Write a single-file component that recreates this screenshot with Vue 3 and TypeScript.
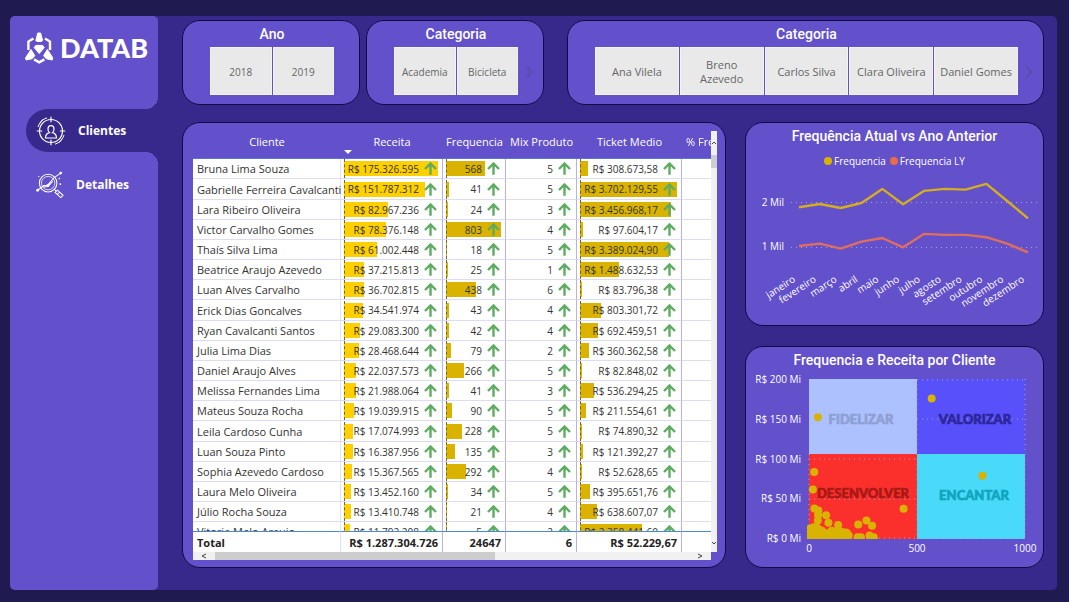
<script setup lang="ts">
interface Row {
  name: string
  revenue: number
  frequency: number
  mix: number
  ticket: number
}

const rows: Row[] = [
  { name: 'Bruna Lima Souza', revenue: 175326595, frequency: 568, mix: 5, ticket: 308673.58 },
  { name: 'Gabrielle Ferreira Cavalcanti', revenue: 151787312, frequency: 41, mix: 5, ticket: 3702129.55 },
  { name: 'Lara Ribeiro Oliveira', revenue: 82967236, frequency: 24, mix: 3, ticket: 3456968.17 },
  { name: 'Victor Carvalho Gomes', revenue: 78376148, frequency: 803, mix: 4, ticket: 97604.17 },
  { name: 'Thaís Silva Lima', revenue: 61002448, frequency: 18, mix: 5, ticket: 3389024.9 },
  { name: 'Beatrice Araujo Azevedo', revenue: 37215813, frequency: 25, mix: 1, ticket: 1488632.53 },
  { name: 'Luan Alves Carvalho', revenue: 36702815, frequency: 438, mix: 6, ticket: 83796.38 },
  { name: 'Erick Dias Goncalves', revenue: 34541974, frequency: 43, mix: 4, ticket: 803301.72 },
  { name: 'Ryan Cavalcanti Santos', revenue: 29083300, frequency: 42, mix: 4, ticket: 692459.51 },
  { name: 'Julia Lima Dias', revenue: 28468644, frequency: 79, mix: 2, ticket: 360362.58 },
  { name: 'Daniel Araujo Alves', revenue: 22037573, frequency: 266, mix: 5, ticket: 82848.02 },
  { name: 'Melissa Fernandes Lima', revenue: 21988064, frequency: 41, mix: 3, ticket: 536294.25 },
  { name: 'Mateus Souza Rocha', revenue: 19039915, frequency: 90, mix: 5, ticket: 211554.61 },
  { name: 'Leila Cardoso Cunha', revenue: 17074993, frequency: 228, mix: 5, ticket: 74890.32 },
  { name: 'Luan Souza Pinto', revenue: 16387956, frequency: 135, mix: 3, ticket: 121392.27 },
  { name: 'Sophia Azevedo Cardoso', revenue: 15367565, frequency: 292, mix: 4, ticket: 52628.65 },
  { name: 'Laura Melo Oliveira', revenue: 13452160, frequency: 34, mix: 5, ticket: 395651.76 },
  { name: 'Júlio Rocha Souza', revenue: 13410748, frequency: 21, mix: 4, ticket: 638607.07 },
  { name: 'Vitoria Melo Araujo', revenue: 11792208, frequency: 5, mix: 2, ticket: 2358441.6 },
]

const MAX_REVENUE = 175326595
const MAX_FREQUENCY = 803
const MAX_TICKET = 3702129.55

function money(value: number, decimals: number): string {
  const [whole, cents] = value.toFixed(decimals).split('.')
  const grouped = whole.replace(/\B(?=(\d{3})+$)/g, '.')
  return 'R$ ' + grouped + (cents ? ',' + cents : '')
}

function share(value: number, max: number): string {
  return Math.max(2, (value / max) * 100) + '%'
}

const years = ['2018', '2019']
const categories = ['Academia', 'Bicicleta']
const sellers = ['Ana Vilela', 'Breno Azevedo', 'Carlos Silva', 'Clara Oliveira', 'Daniel Gomes']

const months = ['janeiro', 'fevereiro', 'março', 'abril', 'maio', 'junho', 'julho', 'agosto', 'setembro', 'outubro', 'novembro', 'dezembro']
const current = [1882, 1955, 1866, 1978, 2291, 1949, 2246, 2291, 2275, 2403, 2022, 1635]
const previous = [1022, 1076, 964, 1121, 1201, 994, 1291, 1268, 1268, 1217, 1076, 881]

const monthX = (i: number): number => 53 + (i * 229) / 11
const countY = (v: number): number => 120 - v * 0.045
const line = (values: number[]): string => values.map((v, i) => `${monthX(i).toFixed(1)},${countY(v).toFixed(1)}`).join(' ')

const plotX = (v: number): number => 63 + v * 0.216
const plotY = (v: number): number => 165 - v * 0.795

const points: [number, number][] = rows.map((r) => [r.frequency, r.revenue / 1000000])
for (let x = 4; x <= 190; x += 9) points.push([x, x % 2 ? 1 : 3])
for (let x = 8; x <= 176; x += 12) points.push([x, 6])
points.push([12, 10], [28, 10], [45, 11], [60, 9], [105, 9], [128, 8], [150, 8], [170, 7])
points.push([225, 1], [240, 1], [280, 3], [300, 1])
</script>

<template>
  <div class="page">
    <div class="panel">
      <aside class="sidebar">
        <div class="brand">
          <svg class="brand-mark" viewBox="0 0 28 32" aria-hidden="true">
            <g fill="#fff" stroke="#fff" stroke-width="1" stroke-linejoin="round">
              <path d="M12.800 1h2.800l2 7.500-1 1h-4.800l-1-1z" />
              <path d="M6 17.500l3.800 6.200-2.600 3-6 1.300-.7-2z" />
              <path d="M22.400 17.500l-3.800 6.200 2.600 3 6 1.300.7-2z" />
              <path d="M10.800 13.400h6.800l1.600 2.200-5 6-5-6z" />
            </g>
            <g fill="none" stroke="#fff" stroke-width="2.400">
              <path d="M3.400 18V9.600l5-3.200M25 18V9.600l-5-3.200M9 27.400l5.200 3 5.200-3" />
            </g>
          </svg>
          <span class="brand-name">DATAB</span>
        </div>
        <nav class="nav">
          <a class="nav-item active" href="#clientes">
            <svg class="nav-icon" viewBox="0 0 30 30" fill="none" stroke="#fff" stroke-width="1.200" aria-hidden="true">
              <circle cx="15" cy="15" r="11.500" />
              <path d="M15 .8v5.400M15 23.800v5.400M.8 15h5.400M23.800 15h5.400" />
              <path d="M2 11a13.600 13.600 0 0 1 9-9.200M4 7.500A13 13 0 0 1 7.500 3M28 19a13.600 13.600 0 0 1-9 9.200M26 22.500a13 13 0 0 1-3.500 4.500" stroke-width="1" />
              <path d="M12 13.200a3 3.600 0 1 1 6 0c0 1.600-.8 2.800-1.500 3.400 2.500.6 4 1.600 4 5.400h-11c0-3.800 1.500-4.800 4-5.400-.7-.6-1.500-1.800-1.500-3.400z" />
            </svg>
            <span>Clientes</span>
          </a>
          <a class="nav-item" href="#detalhes">
            <svg class="nav-icon compact" viewBox="0 0 30 30" fill="none" stroke="#fff" stroke-width="1.100" aria-hidden="true">
              <circle cx="13" cy="13" r="9.400" />
              <circle cx="13" cy="13" r="7.200" stroke-width=".8" />
              <path d="M19.500 19.500l2 2M20.500 23l2.500-2.500 6 5.500-2.500 2.500zM23 25l2.500-2.500" />
              <path d="M1.800 20.600l6.500-5 4.200-.4 7-8.200 7-4.800M8 17l5-.5 5-5.500" />
              <g fill="#fff" stroke="none">
                <circle cx="1.800" cy="20.600" r="1.500" />
                <circle cx="12.500" cy="15.600" r="1.500" />
                <circle cx="26.500" cy="2.200" r="1.500" />
                <circle cx="25" cy="8" r=".9" />
                <circle cx="26" cy="14" r="1" />
                <circle cx="3" cy="6" r=".7" />
              </g>
            </svg>
            <span>Detalhes</span>
          </a>
        </nav>
      </aside>

      <main class="content">
        <div class="filters">
          <section class="card filter">
            <h2>Ano</h2>
            <div class="tiles small">
              <button v-for="y in years" :key="y" type="button">{{ y }}</button>
            </div>
          </section>
          <section class="card filter">
            <h2>Categoria</h2>
            <div class="tiles small">
              <button v-for="c in categories" :key="c" type="button">{{ c }}</button>
            </div>
            <button class="next" type="button" aria-label="Próximo">
              <svg viewBox="0 0 8 12"><path d="M2 1l4 5-4 5" /></svg>
            </button>
          </section>
          <section class="card filter wide">
            <h2>Categoria</h2>
            <div class="tiles">
              <button v-for="s in sellers" :key="s" type="button">{{ s }}</button>
            </div>
            <button class="next" type="button" aria-label="Próximo">
              <svg viewBox="0 0 8 12"><path d="M2 1l4 5-4 5" /></svg>
            </button>
          </section>
        </div>

        <div class="reports">
          <section class="card table-card">
            <div class="viewport">
              <table>
                <colgroup>
                  <col />
                  <col class="c-revenue" />
                  <col class="c-frequency" />
                  <col class="c-mix" />
                  <col class="c-ticket" />
                  <col class="c-percent" />
                </colgroup>
                <thead>
                  <tr>
                    <th scope="col">Cliente</th>
                    <th scope="col" class="sorted">Receita</th>
                    <th scope="col">Frequencia</th>
                    <th scope="col">Mix Produto</th>
                    <th scope="col">Ticket Medio</th>
                    <th scope="col" class="cut">% Frequencia</th>
                  </tr>
                </thead>
                <tbody>
                  <tr v-for="r in rows" :key="r.name">
                    <td class="name">{{ r.name }}</td>
                    <td>
                      <div class="track axis">
                        <i class="bar bright" :style="{ width: share(r.revenue, MAX_REVENUE) }"></i>
                        <span>{{ money(r.revenue, 0) }}</span>
                        <svg class="up" viewBox="0 0 13 13"><path d="M6.500 12.800V2M1 7l5.500-5.500L12 7" /></svg>
                      </div>
                    </td>
                    <td>
                      <div class="track axis">
                        <i class="bar" :style="{ width: share(r.frequency, MAX_FREQUENCY) }"></i>
                        <span>{{ r.frequency }}</span>
                        <svg class="up" viewBox="0 0 13 13"><path d="M6.500 12.800V2M1 7l5.500-5.500L12 7" /></svg>
                      </div>
                    </td>
                    <td>
                      <div class="track">
                        <span>{{ r.mix }}</span>
                        <svg class="up" viewBox="0 0 13 13"><path d="M6.500 12.800V2M1 7l5.500-5.500L12 7" /></svg>
                      </div>
                    </td>
                    <td>
                      <div class="track axis">
                        <i class="bar" :style="{ width: share(r.ticket, MAX_TICKET) }"></i>
                        <span>{{ money(r.ticket, 2) }}</span>
                        <svg class="up" viewBox="0 0 13 13"><path d="M6.500 12.800V2M1 7l5.500-5.500L12 7" /></svg>
                      </div>
                    </td>
                    <td></td>
                  </tr>
                </tbody>
                <tfoot>
                  <tr>
                    <th scope="row" class="name">Total</th>
                    <td>R$ 1.287.304.726</td>
                    <td>24647</td>
                    <td>6</td>
                    <td>R$ 52.229,67</td>
                    <td></td>
                  </tr>
                </tfoot>
              </table>
            </div>
            <div class="vbar" aria-hidden="true">
              <svg viewBox="0 0 6 6"><path d="M1 4l2-2 2 2" /></svg>
              <i></i>
              <svg class="end" viewBox="0 0 6 6"><path d="M1 2l2 2 2-2" /></svg>
            </div>
            <div class="hbar" aria-hidden="true">
              <svg viewBox="0 0 6 6"><path d="M5 1L1 3l4 2" /></svg>
              <i></i>
              <svg class="end" viewBox="0 0 6 6"><path d="M1 1l4 2-4 2" /></svg>
            </div>
          </section>

          <div class="charts">
            <section class="card chart">
              <h2>Frequência Atual vs Ano Anterior</h2>
              <ul class="legend">
                <li><i class="now"></i>Frequencia</li>
                <li><i class="past"></i>Frequencia LY</li>
              </ul>
              <svg class="plot" viewBox="0 0 297 153" role="img" aria-label="Frequência por mês">
                <path class="grid" d="M45 30.500H292M45 75.500H292" />
                <text class="label" x="38" y="34" text-anchor="end">2 Mil</text>
                <text class="label" x="38" y="78" text-anchor="end">1 Mil</text>
                <polyline class="series now" :points="line(current)" />
                <polyline class="series past" :points="line(previous)" />
                <text
                  v-for="(m, i) in months"
                  :key="m"
                  class="label"
                  text-anchor="end"
                  :transform="`translate(${monthX(i) - 3} 109) rotate(-33)`"
                >{{ m }}</text>
              </svg>
            </section>

            <section class="card chart">
              <h2>Frequencia e Receita por Cliente</h2>
              <svg class="plot" viewBox="0 0 297 194" role="img" aria-label="Frequência e receita por cliente">
                <defs>
                  <clipPath id="plot-area"><rect x="61" y="0" width="220" height="166" /></clipPath>
                </defs>
                <rect x="63" y="6" width="108" height="75" fill="#adc0ff" />
                <rect x="171" y="6" width="108" height="75" fill="#5750fb" />
                <rect x="63" y="81" width="108" height="85" fill="#fb302d" />
                <rect x="171" y="81" width="108" height="85" fill="#49d9f9" />
                <path class="grid" d="M171 7H279M171 46H279M63 86H171M63 126H171M63 165H279M63 81V165M171 6V165M279 6V165" />
                <text class="zone" x="115" y="51" fill="#8e9fd2" stroke="#8e9fd2">FIDELIZAR</text>
                <text class="zone" x="229" y="51" fill="#2c2698" stroke="#2c2698">VALORIZAR</text>
                <text class="zone" x="117" y="125" fill="#a81815" stroke="#a81815">DESENVOLVER</text>
                <text class="zone" x="228" y="127" fill="#0fa5bf" stroke="#0fa5bf">ENCANTAR</text>
                <g clip-path="url(#plot-area)" fill="#dab300">
                  <circle v-for="(p, i) in points" :key="i" :cx="plotX(p[0])" :cy="plotY(p[1])" r="4" />
                </g>
                <text v-for="n in [0, 50, 100, 150, 200]" :key="n" class="label" x="55" :y="plotY(n) + 4" text-anchor="end">R$ {{ n }} Mi</text>
                <text v-for="n in [0, 500, 1000]" :key="n" class="label" :x="plotX(n)" y="179" text-anchor="middle">{{ n }}</text>
              </svg>
            </section>
          </div>
        </div>
      </main>
    </div>
  </div>
</template>

<style>
body {
  margin: 0;
  background: #1f1b50;
}
</style>

<style scoped>
.page {
  box-sizing: border-box;
  min-height: 100vh;
  display: flex;
  padding: 16px 12px 12px 10px;
  background: #1f1b50;
  color: #fff;
  font-family: "Open Sans", "Noto Sans", sans-serif;
  font-size: 11px;
}
.panel {
  flex: 1;
  display: flex;
  border-radius: 5px;
  background: #37288b;
}
.sidebar {
  flex: 0 0 148px;
  border-radius: 5px;
  background: #6350cb;
}
.brand {
  display: flex;
  align-items: center;
  gap: 7px;
  height: 93px;
  box-sizing: border-box;
  padding: 0 0 30px 15px;
}
.brand-mark {
  width: 28px;
  height: 32px;
}
.brand-name {
  font-family: Lato, sans-serif;
  font-size: 27px;
  font-weight: 900;
}
.nav {
  display: flex;
  flex-direction: column;
  gap: 11px;
}
.nav-item {
  position: relative;
  display: flex;
  align-items: center;
  gap: 12px;
  height: 43px;
  margin-left: 16px;
  padding-left: 10px;
  color: #fff;
  font-size: 12px;
  font-weight: 700;
  text-decoration: none;
}
.nav-item.active {
  border-radius: 22px 0 0 22px;
  background: #37288b;
}
.nav-item.active::before,
.nav-item.active::after {
  content: "";
  position: absolute;
  right: 0;
  width: 12px;
  height: 12px;
}
.nav-item.active::before {
  bottom: 100%;
  background: radial-gradient(circle at 0 0, transparent 12px, #37288b 12px);
}
.nav-item.active::after {
  top: 100%;
  background: radial-gradient(circle at 0 100%, transparent 12px, #37288b 12px);
}
.nav-icon {
  width: 30px;
  height: 30px;
}
.nav-icon.compact {
  width: 28px;
  height: 28px;
}
.content {
  flex: 1;
  min-width: 0;
  display: flex;
  flex-direction: column;
  gap: 17px;
  padding: 4px 13px 22px 24px;
}
.card {
  box-sizing: border-box;
  min-width: 0;
  border: 1px solid #120a45;
  border-radius: 18px;
  background: #6350cb;
}
h2 {
  margin: 0;
  font-family: Roboto, sans-serif;
  font-size: 14px;
  font-weight: 500;
  line-height: 26px;
  text-align: center;
}
.filters {
  display: grid;
  grid-template-columns: 178fr 178fr 494fr;
  gap: 6px;
}
.filter {
  position: relative;
  padding: 0 25px 9px 27px;
}
.filter.wide {
  margin-left: 17px;
}
.tiles {
  display: flex;
  gap: 1px;
  height: 48px;
}
.tiles button {
  flex: 1 1 0;
  min-width: 0;
  padding: 2px 4px 0;
  border: 1px solid #f3f3f6;
  background: #e9e9e9;
  color: #666;
  font: inherit;
  line-height: 14px;
}
.tiles.small button {
  padding: 2px 0 0;
  font-size: 10px;
}
.next {
  position: absolute;
  right: 8px;
  top: 44px;
  width: 12px;
  height: 14px;
  padding: 0;
  border: 0;
  background: none;
}
.next svg {
  display: block;
  width: 8px;
  height: 12px;
  margin: auto;
  fill: none;
  stroke: #5b4cab;
  stroke-width: 2;
}
.reports {
  flex: 1;
  display: grid;
  grid-template-columns: 544fr 299fr;
  gap: 19px;
}
.table-card {
  display: grid;
  grid-template-columns: minmax(0, 1fr) 6px;
  grid-template-rows: 1fr 8px;
  padding: 8px 8px 7px 10px;
}
.viewport {
  height: 421px;
  overflow: hidden;
}
table {
  width: calc(100% + 40px);
  table-layout: fixed;
  border-collapse: separate;
  border-spacing: 0;
}
.c-revenue { width: 102px; }
.c-frequency { width: 63px; }
.c-mix { width: 71px; }
.c-ticket { width: 105px; }
.c-percent { width: 69px; }
th,
td {
  box-sizing: border-box;
  padding: 0;
  white-space: nowrap;
}
thead th {
  position: sticky;
  top: 0;
  z-index: 2;
  height: 28px;
  padding-bottom: 7px;
  border-bottom: 1px solid #5b74d6;
  background: #6350cb;
  font-weight: 400;
}
thead .sorted::after {
  content: "";
  position: absolute;
  left: 3px;
  bottom: 4px;
  border: 4px solid transparent;
  border-top-color: #fff;
  border-bottom: 0;
}
thead .cut {
  padding-left: 4px;
  text-align: left;
}
tbody td {
  height: 20px;
  border-right: 1px solid #b9b0e4;
  border-bottom: 1px solid #dedcf0;
  background: #fff;
  color: #333;
}
tbody tr:nth-child(6n + 2) td {
  height: 21px;
}
tbody .name {
  border-right-color: #e3e1f3;
}
.name {
  padding-left: 4px;
  text-align: left;
}
.track {
  position: relative;
  display: flex;
  align-items: center;
  justify-content: flex-end;
  gap: 5px;
  height: 15px;
  margin: 0 4px 0 3px;
  padding-right: 1px;
  font-size: 10px;
}
.track.axis::before {
  content: "";
  position: absolute;
  top: -2px;
  bottom: -2px;
  left: 0;
  z-index: 1;
  border-left: 1px dashed #7a6518;
}
.bar {
  position: absolute;
  left: 0;
  top: 0;
  bottom: 0;
  background: #d9b300;
}
.bar.bright {
  background: #ffd000;
}
.track span,
.up {
  position: relative;
}
.up {
  flex: none;
  width: 13px;
  height: 13px;
  fill: none;
  stroke: #5eac62;
  stroke-width: 2.4;
}
tfoot th,
tfoot td {
  position: sticky;
  bottom: 0;
  z-index: 2;
  height: 21px;
  padding-right: 4px;
  border-top: 1px solid #4a8ad0;
  border-right: 1px solid #b9b0e4;
  background: #fff;
  color: #222;
  font-weight: 700;
  text-align: right;
}
tfoot th.name {
  border-right-color: #e3e1f3;
  text-align: left;
}
.vbar,
.hbar {
  display: flex;
  background: #f1f1f1;
}
.vbar {
  flex-direction: column;
}
.vbar svg,
.hbar svg {
  width: 6px;
  height: 6px;
  fill: none;
  stroke: #444;
  stroke-width: 1;
}
.vbar svg {
  padding: 9px 0;
}
.vbar i {
  height: 13px;
  background: #cdcdcd;
}
.vbar .end {
  margin-top: auto;
  padding: 6px 0;
}
.hbar svg {
  padding: 1px 8px;
}
.hbar i {
  width: 54%;
  background: #cdcdcd;
}
.hbar .end {
  margin-left: auto;
}
.charts {
  min-width: 0;
  display: flex;
  flex-direction: column;
  gap: 20px;
}
.chart {
  display: flex;
  flex-direction: column;
}
.legend {
  display: flex;
  align-items: center;
  justify-content: center;
  gap: 4px;
  height: 23px;
  margin: 0;
  padding: 0;
  list-style: none;
  font-size: 10px;
}
.legend li {
  display: flex;
  align-items: center;
  gap: 2px;
}
.legend i {
  width: 8px;
  height: 8px;
  border-radius: 50%;
}
.legend .now { background: #dab300; }
.legend .past { background: #e86c45; }
.plot {
  display: block;
  width: 100%;
}
.grid {
  fill: none;
  stroke: #a79ce3;
  stroke-width: 1;
  stroke-dasharray: 1 4;
}
.label {
  fill: #fff;
  font-size: 10px;
}
.series {
  fill: none;
  stroke-width: 2.4;
  stroke-linejoin: round;
}
.series.now { stroke: #d3ae20; }
.series.past { stroke: #df6f5c; }
.zone {
  font-family: Lato, sans-serif;
  font-size: 13px;
  font-weight: 900;
  stroke-width: 0.6;
  text-anchor: middle;
}
</style>
